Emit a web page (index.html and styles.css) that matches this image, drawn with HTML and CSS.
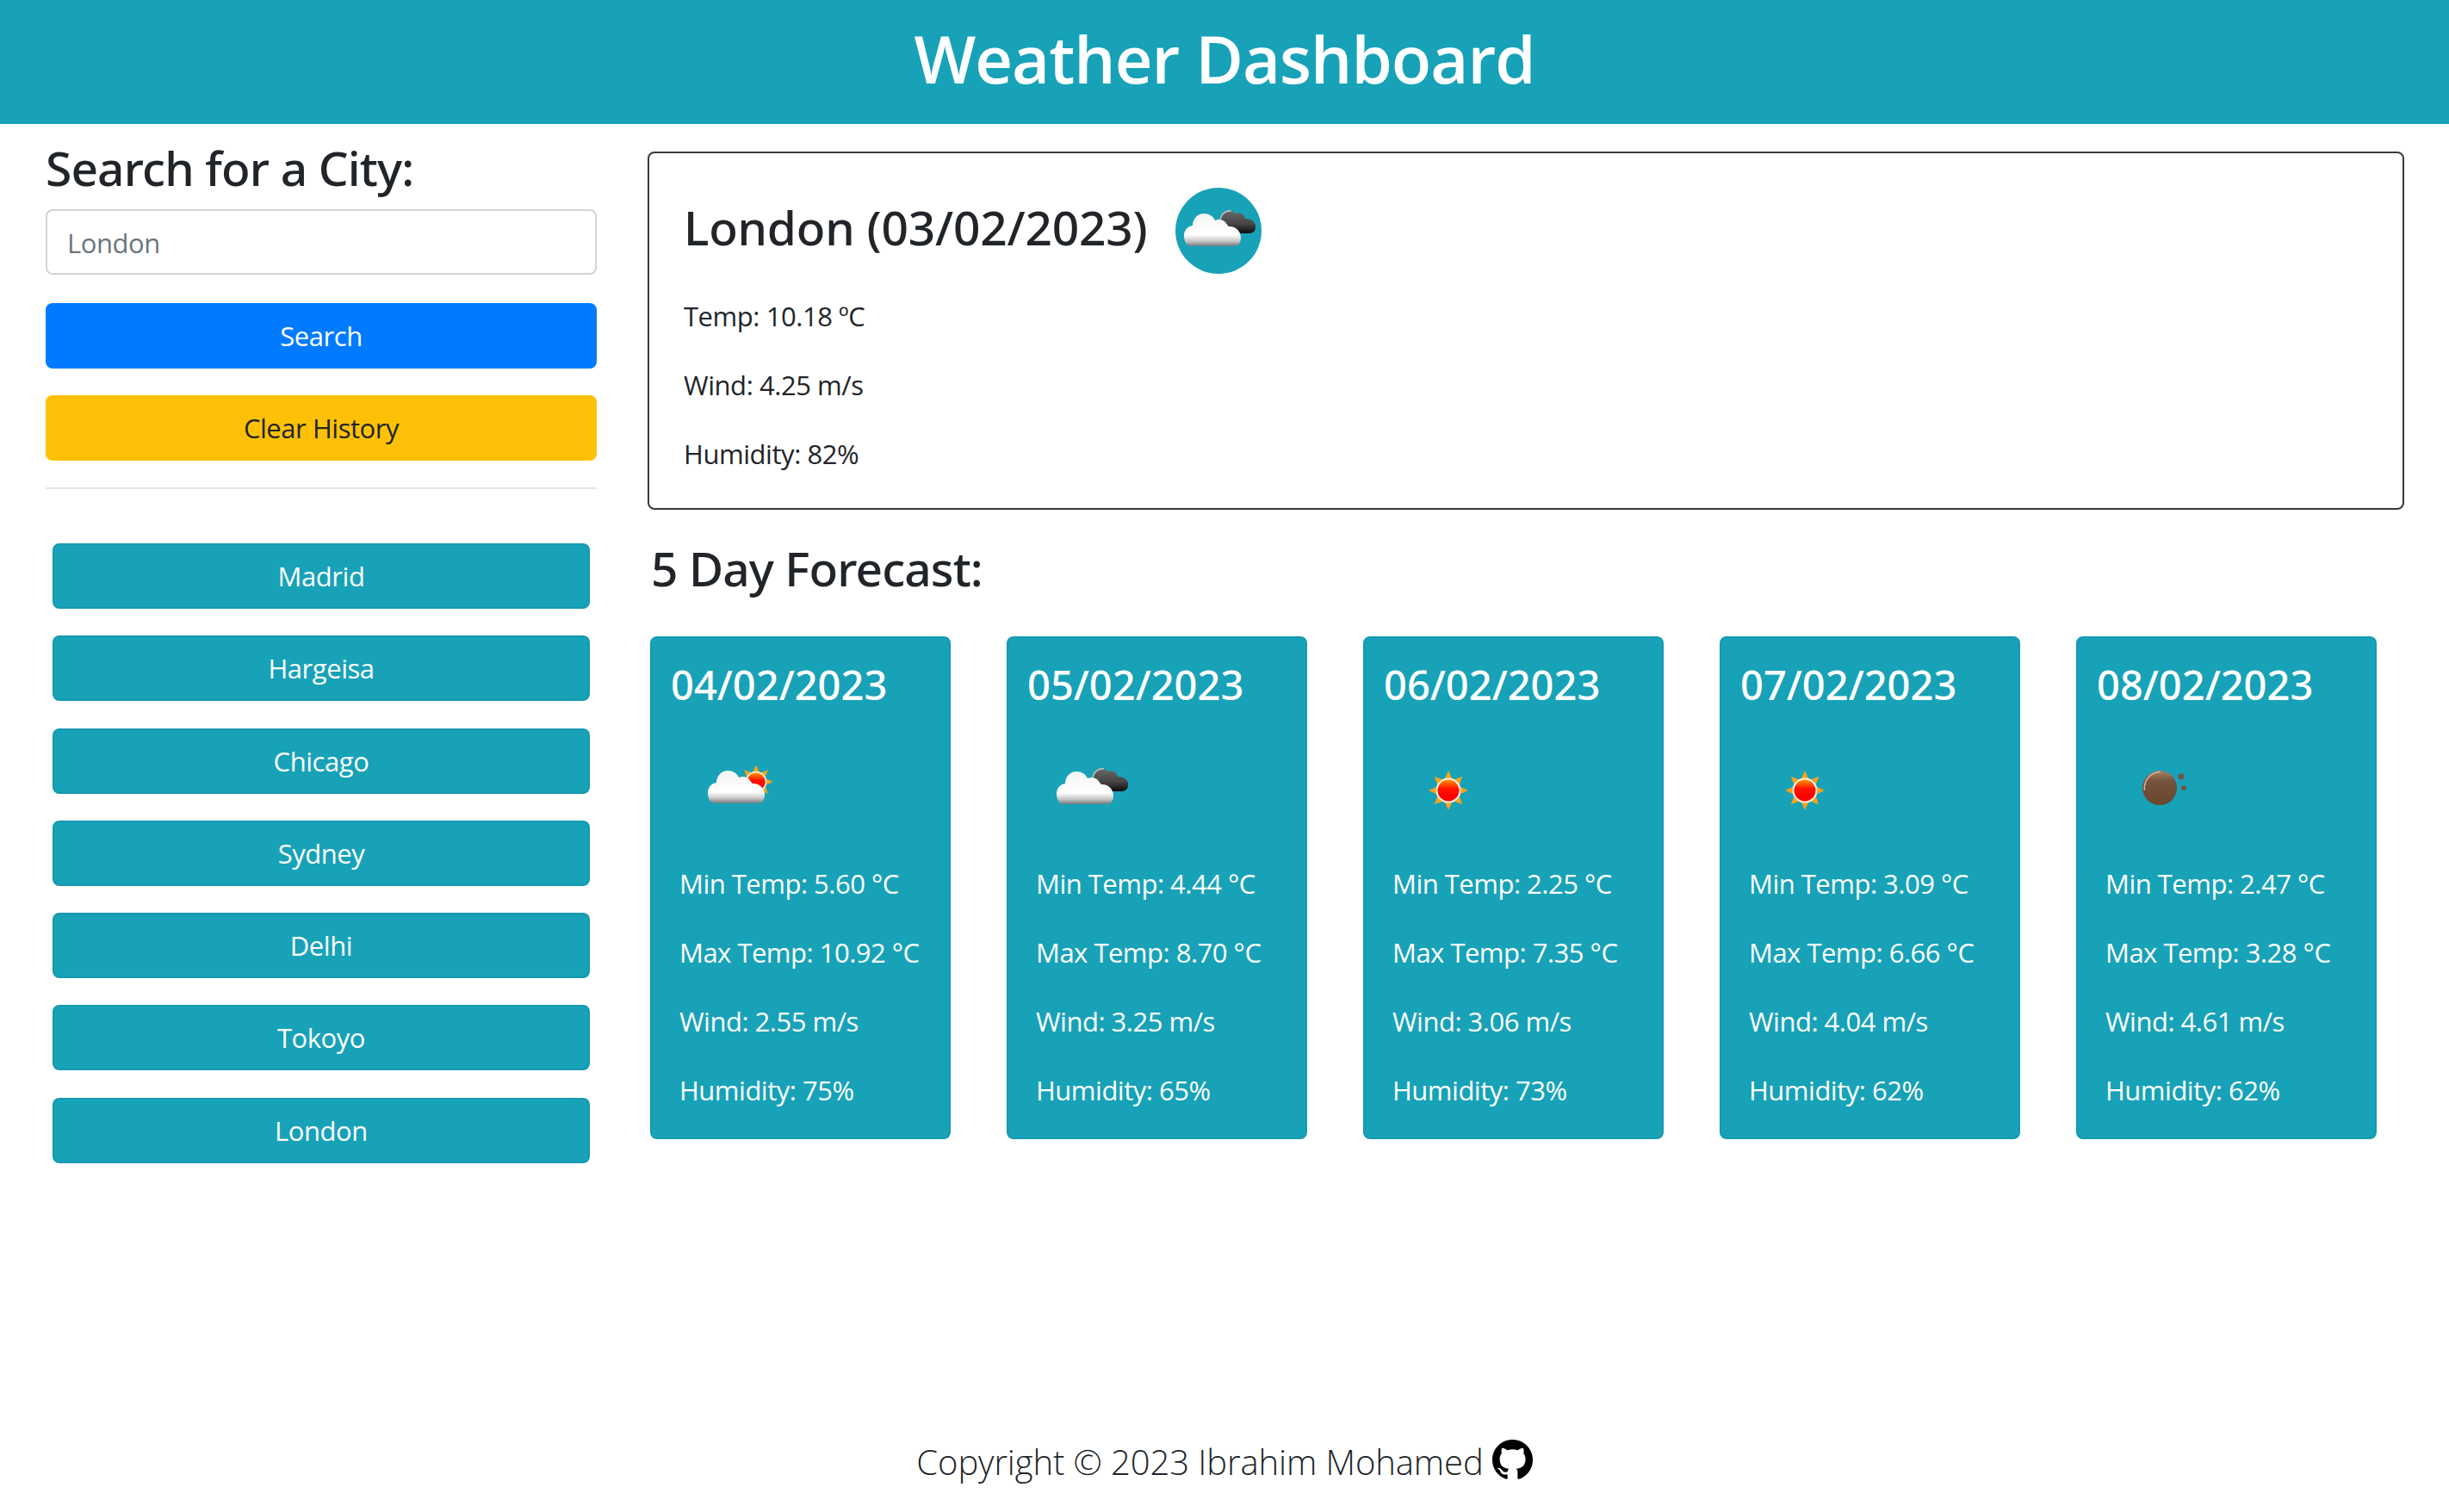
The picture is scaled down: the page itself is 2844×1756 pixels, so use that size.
FILE: index.html
```html
<!DOCTYPE html>
<html>
	<head>
		<meta charset="utf-8">
		<title>Weather Dashboard</title>
		<link rel="stylesheet" href="styles.css">
	</head>
	<body>
		<svg class="icon-defs" xmlns="http://www.w3.org/2000/svg">
			<defs>
				<linearGradient id="white-cloud" x1="0" y1="0" x2="0" y2="1">
					<stop offset="0" stop-color="#f4f4f4"/>
					<stop offset="0.65" stop-color="#ffffff"/>
					<stop offset="0.85" stop-color="#c4c4c4"/>
					<stop offset="1" stop-color="#6f7a7c"/>
				</linearGradient>
				<linearGradient id="dark-cloud" x1="0" y1="0" x2="0" y2="1">
					<stop offset="0" stop-color="#6a6a6a"/>
					<stop offset="0.6" stop-color="#444444"/>
					<stop offset="1" stop-color="#0c0c0c"/>
				</linearGradient>
				<linearGradient id="sun-disc" x1="0" y1="0" x2="0" y2="1">
					<stop offset="0" stop-color="#ffa000"/>
					<stop offset="0.45" stop-color="#ff0a00"/>
					<stop offset="1" stop-color="#ff0000"/>
				</linearGradient>
				<linearGradient id="brown-disc" x1="0" y1="0" x2="0" y2="1">
					<stop offset="0" stop-color="#a98268"/>
					<stop offset="0.3" stop-color="#74533c"/>
					<stop offset="1" stop-color="#6a452d"/>
				</linearGradient>
				<filter id="soft" x="-10%" y="-10%" width="120%" height="120%">
					<feGaussianBlur stdDeviation="0.6"/>
				</filter>
				<path id="cloud-shape" d="M18 68C13 68 10 62 10 56C10 49 14 45 20 44C20 36 26 30 33 30C39 30 44 33 46 38C50 36 55 37 58 40C60 43 61 44 62 45C69 44 76 50 76 58C76 64 73 68 69 68Z"/>
				<g id="sun-shape">
					<polygon fill="#f7a31c" points="23,0 12,5 16.3,16.3 5,12 0,23 -5,12 -16.3,16.3 -12,5 -23,0 -12,-5 -16.3,-16.3 -5,-12 0,-23 5,-12 16.3,-16.3 12,-5"/>
					<circle r="13.5" fill="url(#sun-disc)" stroke="#fff0e0" stroke-width="2"/>
				</g>
				<symbol id="icon-clouds" viewBox="0 0 100 100">
					<g filter="url(#soft)">
						<path fill="url(#dark-cloud)" d="M56 53C51 46 50 35 55 30C59 25 66 25 69 30C74 28 80 30 81 36C88 36 94 40 93 46C93 50 90 53 86 53Z"/>
						<path fill="none" stroke="#b9c4c6" stroke-width="1.6" d="M52 38C53 30 59 26 65 27"/>
						<use href="#cloud-shape" fill="url(#white-cloud)"/>
					</g>
				</symbol>
				<symbol id="icon-sun-cloud" viewBox="0 0 100 100">
					<g filter="url(#soft)">
						<use href="#sun-shape" transform="translate(75 42) scale(0.85)"/>
						<use href="#cloud-shape" transform="translate(9 -1)" fill="url(#white-cloud)"/>
					</g>
				</symbol>
				<symbol id="icon-sun" viewBox="0 0 100 100">
					<use href="#sun-shape" transform="translate(51 52)" filter="url(#soft)"/>
				</symbol>
				<symbol id="icon-mist" viewBox="0 0 100 100">
					<g filter="url(#soft)">
						<circle cx="49" cy="49" r="20" fill="url(#brown-disc)"/>
						<path fill="none" stroke="#d2b29c" stroke-width="1.5" d="M31.5 52C30 41 38 31 50 30.5"/>
						<circle cx="74" cy="36" r="3.4" fill="#74533c"/>
						<circle cx="77" cy="49" r="3" fill="#74533c"/>
					</g>
				</symbol>
			</defs>
		</svg>

		<header class="page-header">
			<h1>Weather Dashboard</h1>
		</header>

		<div class="page-body">
			<aside class="sidebar">
				<h3 class="search-title">Search for a City:</h3>
				<input class="search-input" type="text" placeholder="London">
				<button class="btn btn-search">Search</button>
				<button class="btn btn-clear">Clear History</button>
				<hr class="divider">
				<div class="history">
					<button class="btn btn-city">Madrid</button>
					<button class="btn btn-city">Hargeisa</button>
					<button class="btn btn-city">Chicago</button>
					<button class="btn btn-city">Sydney</button>
					<button class="btn btn-city">Delhi</button>
					<button class="btn btn-city">Tokoyo</button>
					<button class="btn btn-city">London</button>
				</div>
			</aside>

			<main class="content">
				<section class="today">
					<div class="today-head">
						<h2>London (03/02/2023)</h2>
						<svg class="today-icon"><use href="#icon-clouds"/></svg>
					</div>
					<p>Temp: 10.18 ºC</p>
					<p>Wind: 4.25 m/s</p>
					<p>Humidity: 82%</p>
				</section>

				<h3 class="forecast-title">5 Day Forecast:</h3>
				<div class="forecast">
					<div class="day-card">
						<h4>04/02/2023</h4>
						<svg class="day-icon"><use href="#icon-sun-cloud"/></svg>
						<p>Min Temp: 5.60 °C</p>
						<p>Max Temp: 10.92 °C</p>
						<p>Wind: 2.55 m/s</p>
						<p>Humidity: 75%</p>
					</div>
					<div class="day-card">
						<h4>05/02/2023</h4>
						<svg class="day-icon"><use href="#icon-clouds"/></svg>
						<p>Min Temp: 4.44 °C</p>
						<p>Max Temp: 8.70 °C</p>
						<p>Wind: 3.25 m/s</p>
						<p>Humidity: 65%</p>
					</div>
					<div class="day-card">
						<h4>06/02/2023</h4>
						<svg class="day-icon"><use href="#icon-sun"/></svg>
						<p>Min Temp: 2.25 °C</p>
						<p>Max Temp: 7.35 °C</p>
						<p>Wind: 3.06 m/s</p>
						<p>Humidity: 73%</p>
					</div>
					<div class="day-card">
						<h4>07/02/2023</h4>
						<svg class="day-icon"><use href="#icon-sun"/></svg>
						<p>Min Temp: 3.09 °C</p>
						<p>Max Temp: 6.66 °C</p>
						<p>Wind: 4.04 m/s</p>
						<p>Humidity: 62%</p>
					</div>
					<div class="day-card">
						<h4>08/02/2023</h4>
						<svg class="day-icon"><use href="#icon-mist"/></svg>
						<p>Min Temp: 2.47 °C</p>
						<p>Max Temp: 3.28 °C</p>
						<p>Wind: 4.61 m/s</p>
						<p>Humidity: 62%</p>
					</div>
				</div>
			</main>
		</div>

		<footer class="page-footer">
			<span>Copyright © 2023 Ibrahim Mohamed</span>
			<svg class="github-icon" viewBox="0 0 16 16"><path d="M8 0C3.58 0 0 3.58 0 8c0 3.54 2.29 6.53 5.47 7.59.4.07.55-.17.55-.38 0-.19-.01-.82-.01-1.49-2.01.37-2.53-.49-2.69-.94-.09-.23-.48-.94-.82-1.13-.28-.15-.68-.52-.01-.53.63-.01 1.08.58 1.23.82.72 1.21 1.87.87 2.33.66.07-.52.28-.87.51-1.07-1.78-.2-3.64-.89-3.64-3.95 0-.87.31-1.59.82-2.15-.08-.2-.36-1.02.08-2.12 0 0 .67-.21 2.2.82.64-.18 1.32-.27 2-.27.68 0 1.36.09 2 .27 1.53-1.04 2.2-.82 2.2-.82.44 1.1.16 1.92.08 2.12.51.56.82 1.27.82 2.15 0 3.07-1.87 3.75-3.65 3.95.29.25.54.73.54 1.48 0 1.07-.01 1.93-.01 2.2 0 .21.15.46.55.38A8.013 8.013 0 0016 8c0-4.42-3.58-8-8-8z"/></svg>
		</footer>
	</body>
</html>
```

FILE: styles.css
```css
*
{
	box-sizing: border-box;
}

body
{
	display: flex;
	flex-direction: column;
	min-height: 100vh;
	margin: 0;
	font-family: "Open Sans", "Noto Sans", sans-serif;
	font-size: 31px;
	line-height: 48px;
	letter-spacing: -0.45px;
	color: #212529;
	background-color: white;
}

h1, h2, h3, h4, p
{
	margin: 0;
}

.icon-defs
{
	display: block;
	width: 0;
	height: 0;
}

.page-header
{
	height: 144px;
	background-color: #17a2b8;
	color: white;
	text-align: center;
}

.page-header h1
{
	font-size: 76px;
	font-weight: 600;
	line-height: 136px;
	letter-spacing: -0.95px;
}

.page-body
{
	display: flex;
}

.sidebar
{
	display: flex;
	flex-direction: column;
	width: 640px;
	margin-left: 53px;
	padding-top: 19px;
}

.search-title
{
	font-family: "Noto Sans", sans-serif;
	font-size: 55px;
	font-weight: 500;
	line-height: 64px;
	letter-spacing: -0.85px;
	margin-bottom: 16px;
}

.search-input
{
	height: 76px;
	padding: 2px 23px 0;
	margin-bottom: 33px;
	font: inherit;
	letter-spacing: inherit;
	border: 2px solid #ced4da;
	border-radius: 8px;
}

.search-input::placeholder
{
	color: #6c757d;
}

.btn
{
	height: 76px;
	padding: 0;
	border: 0;
	border-radius: 8px;
	font: inherit;
	letter-spacing: inherit;
	text-align: center;
}

.btn-search
{
	margin-bottom: 31px;
	background-color: #007bff;
	color: white;
}

.btn-clear
{
	background-color: #ffc107;
	color: #212529;
}

.divider
{
	width: 100%;
	margin: 31px 0 0;
	border: 0;
	border-top: 2px solid rgba(0, 0, 0, 0.1);
}

.history
{
	display: flex;
	flex-direction: column;
	gap: 31.3px;
	padding: 63px 8px 0;
}

.btn-city
{
	background-color: #17a2b8;
	color: white;
	border: 2px solid rgba(0, 0, 0, 0.05);
}

.content
{
	flex: 1;
	margin-left: 59px;
	margin-right: 52px;
	padding-top: 32px;
}

.today
{
	height: 416px;
	padding: 40px 40px 0;
	border: 2px solid #343a40;
	border-radius: 8px;
}

.today-head
{
	display: flex;
	align-items: center;
	gap: 32px;
	margin-bottom: 25px;
}

.today-head h2
{
	font-family: "Noto Sans", sans-serif;
	font-size: 55px;
	font-weight: 500;
	line-height: 64px;
	letter-spacing: -0.2px;
	margin-top: -8px;
}

.today-icon
{
	width: 100px;
	height: 100px;
	border-radius: 50%;
	background-color: #17a2b8;
}

.today p
{
	margin-bottom: 32px;
}

.forecast-title
{
	margin: 36px 0 0 4px;
	font-family: "Noto Sans", sans-serif;
	font-size: 55px;
	font-weight: 500;
	line-height: 64px;
	letter-spacing: -0.9px;
}

.forecast
{
	display: flex;
	gap: 65px;
	margin: 47px 0 0 3px;
}

.day-card
{
	width: 349px;
	height: 584px;
	padding: 26px 0 0 22px;
	background-color: #17a2b8;
	color: white;
	border: 2px solid rgba(0, 0, 0, 0.05);
	border-radius: 8px;
}

.day-card h4
{
	font-family: "Noto Sans", sans-serif;
	font-size: 47px;
	font-weight: 500;
	line-height: 56px;
	letter-spacing: 0;
}

.day-icon
{
	display: block;
	width: 100px;
	height: 100px;
	margin: 43px 0 36px 24px;
}

.day-card p
{
	margin: 0 0 32px 10px;
	letter-spacing: -0.5px;
	white-space: nowrap;
}

.page-footer
{
	display: flex;
	justify-content: center;
	align-items: center;
	gap: 10px;
	margin-top: auto;
	padding-bottom: 34px;
	font-size: 40px;
	font-weight: 300;
	letter-spacing: -0.1px;
}

.github-icon
{
	width: 47px;
	height: 47px;
	margin-top: -6px;
}
```
